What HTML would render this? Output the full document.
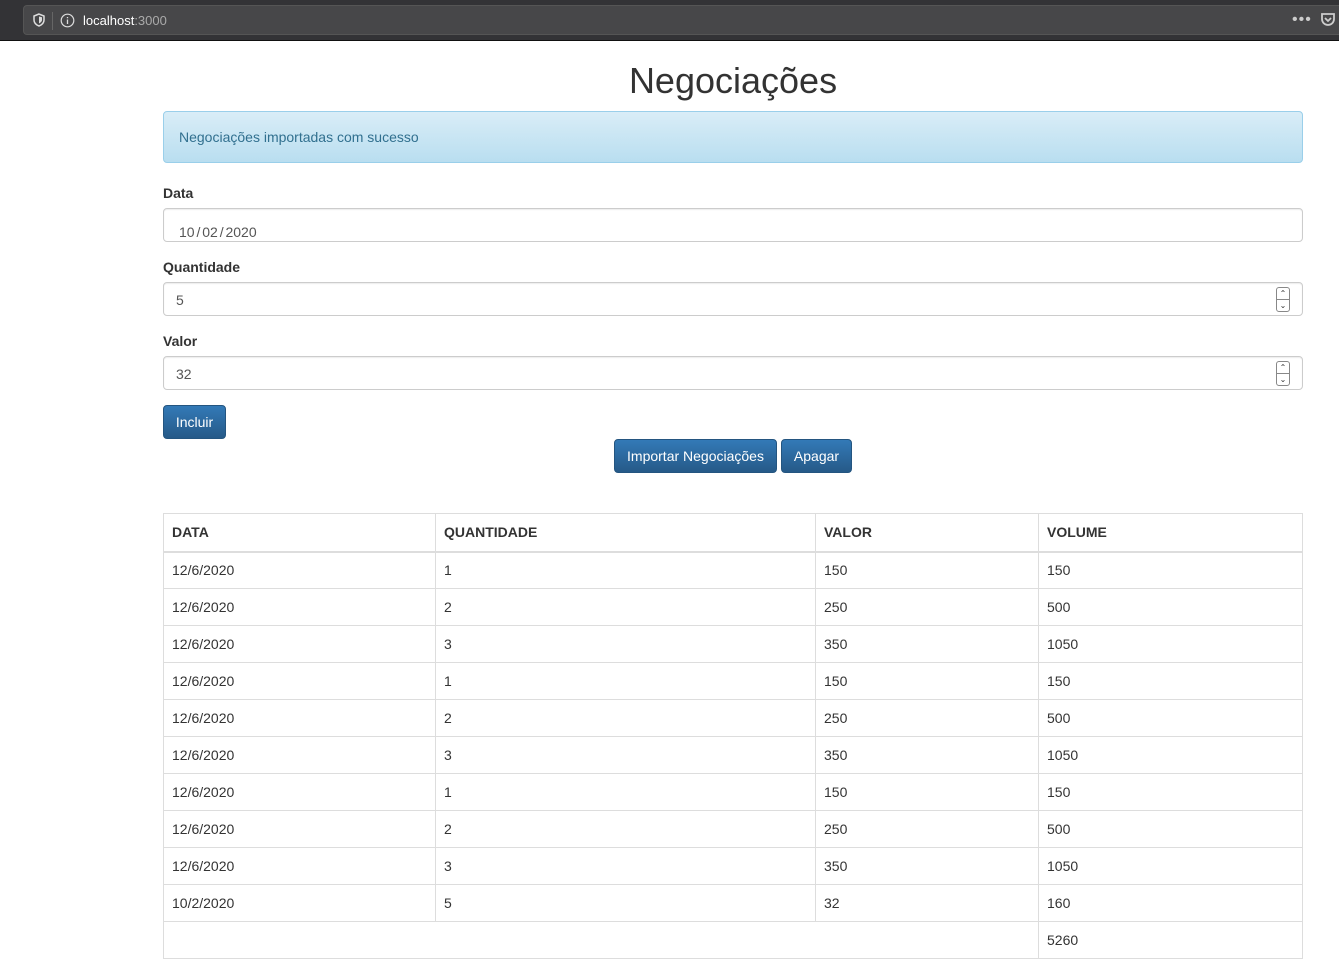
<!DOCTYPE html>
<html><head><meta charset="utf-8"><style>
*{box-sizing:border-box}
body{margin:0;width:1339px;height:973px;overflow:hidden;font-family:"Liberation Sans",sans-serif;font-size:14px;color:#333;background:#fff}
.bar{position:absolute;left:0;top:0;width:1339px;height:41px;background:#333336;border-bottom:1px solid #111}
.url{position:absolute;left:23px;top:5px;width:1330px;height:30px;background:#474749;border-radius:4px;border:1px solid #555}
.url span{position:absolute;top:7px;color:#fff;font-size:13px}
.c{position:absolute;left:163px;width:1140px}
h1{position:absolute;left:163px;width:1140px;top:60px;margin:0;text-align:center;font-weight:400;font-size:36px;color:#333}
.alert{top:111px;height:52px;border:1px solid #9acfea;border-radius:4px;background:linear-gradient(#d9edf7,#b9def0);color:#31708f;padding:17px 15px 0}
label{position:absolute;left:163px;font-weight:bold}
.in{height:34px;border:1px solid #ccc;border-radius:4px;padding:9px 12px;color:#555;box-shadow:inset 0 1px 1px rgba(0,0,0,.075)}
.sp{position:absolute;right:12px;top:4px;width:14px;height:25px;border:1px solid #888;border-radius:3px;font-size:8px;line-height:11px;text-align:center;color:#333}
.sp div{height:12px;border-bottom:1px solid #888}
.btn{position:absolute;height:34px;border:1px solid #245580;border-radius:4px;background:linear-gradient(#337ab7,#265a88);color:#fff;font-size:14px;line-height:32px;text-align:center}
table{position:absolute;left:163px;top:513px;width:1140px;border-collapse:collapse}
td,th{border:1px solid #ddd;padding:0 8px;height:37px;text-align:left}
th{height:38px;border-bottom:2px solid #ddd}
</style></head><body>
<div class="bar"><div class="url">
<svg style="position:absolute;left:8px;top:7px" width="14" height="14" viewBox="0 0 14 14"><path d="M7 1L2 3v4c0 3 2.5 5 5 6 2.5-1 5-3 5-6V3z" fill="none" stroke="#ddd" stroke-width="1.5"/><path d="M7 3.5v7c1.5-.8 3-2 3-3.5V4.3z" fill="#ddd"/></svg>
<div style="position:absolute;left:28px;top:6px;width:1px;height:18px;background:#666"></div>
<svg style="position:absolute;left:36px;top:7px" width="15" height="15" viewBox="0 0 15 15"><circle cx="7.5" cy="7.5" r="6.3" fill="none" stroke="#ddd" stroke-width="1.2"/><path d="M7.5 6.5v4.5M7.5 4v1.3" stroke="#ddd" stroke-width="1.3"/></svg>
<span style="left:59px">localhost<span style="position:static;color:#aaa">:3000</span></span>
<span style="left:1268px;top:5px;color:#ccc;font-size:16px;letter-spacing:1px">•••</span>
<svg style="position:absolute;left:1296px;top:6px" width="16" height="16" viewBox="0 0 16 16"><path d="M2 2h12v5a6 6 0 0 1-12 0z" fill="none" stroke="#ccc" stroke-width="1.8"/><path d="M5 6l3 3 3-3" fill="none" stroke="#ccc" stroke-width="1.8"/></svg>
</div></div>
<h1>Negociações</h1>
<div class="c alert">Negociações importadas com sucesso</div>
<label style="top:185px">Data</label>
<div class="c in" style="top:208px;padding:15px 15px 0;word-spacing:-2px">10 / 02 / 2020</div>
<label style="top:259px">Quantidade</label>
<div class="c in" style="top:282px">5<div class="sp"><div>⌃</div>⌄</div></div>
<label style="top:333px">Valor</label>
<div class="c in" style="top:356px">32<div class="sp"><div>⌃</div>⌄</div></div>
<div class="btn" style="left:163px;top:405px;width:63px">Incluir</div>
<div class="btn" style="left:614px;top:439px;width:163px">Importar Negociações</div>
<div class="btn" style="left:781px;top:439px;width:71px">Apagar</div>
<table>
<tr><th style="width:272px">DATA</th><th style="width:380px">QUANTIDADE</th><th style="width:223px">VALOR</th><th>VOLUME</th></tr>
<tr><td>12/6/2020</td><td>1</td><td>150</td><td>150</td></tr>
<tr><td>12/6/2020</td><td>2</td><td>250</td><td>500</td></tr>
<tr><td>12/6/2020</td><td>3</td><td>350</td><td>1050</td></tr>
<tr><td>12/6/2020</td><td>1</td><td>150</td><td>150</td></tr>
<tr><td>12/6/2020</td><td>2</td><td>250</td><td>500</td></tr>
<tr><td>12/6/2020</td><td>3</td><td>350</td><td>1050</td></tr>
<tr><td>12/6/2020</td><td>1</td><td>150</td><td>150</td></tr>
<tr><td>12/6/2020</td><td>2</td><td>250</td><td>500</td></tr>
<tr><td>12/6/2020</td><td>3</td><td>350</td><td>1050</td></tr>
<tr><td>10/2/2020</td><td>5</td><td>32</td><td>160</td></tr>
<tr><td colspan="3"></td><td>5260</td></tr>
</table>
</body></html>
